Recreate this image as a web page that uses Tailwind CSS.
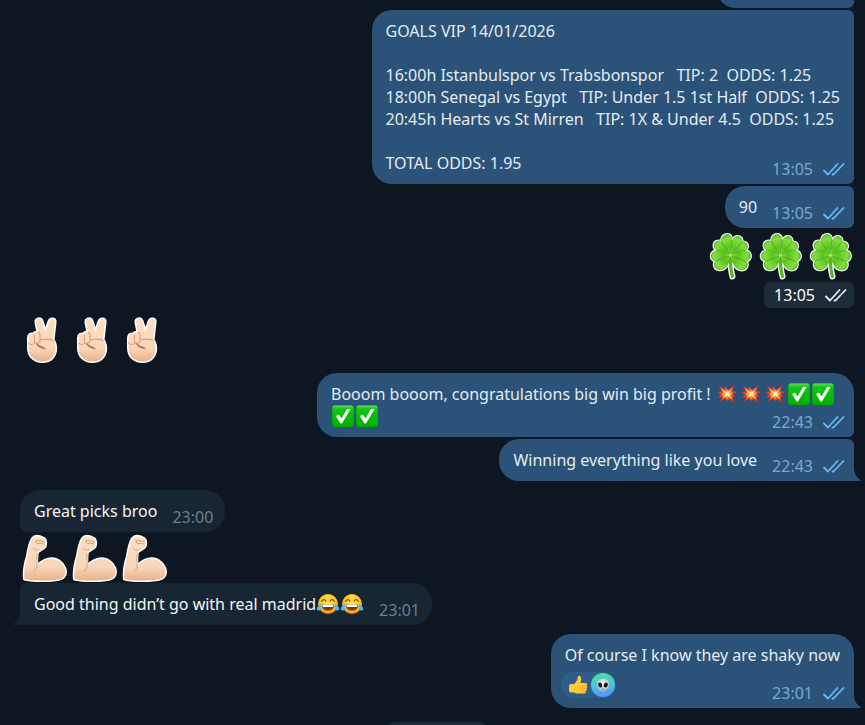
<!DOCTYPE html>
<html lang="en">
<head>
  <meta charset="UTF-8" />
  <meta name="viewport" content="width=device-width, initial-scale=1.0"/>
  <title>Chat</title>
  <script src="https://cdn.jsdelivr.net/npm/@tailwindcss/browser@4"></script>
</head>
<body class="bg-[#0e1621] font-['Noto_Sans',sans-serif] text-base leading-[22px] text-[#f5f5f5] overflow-hidden">

  <!-- Emoji and icon sprites -->
  <svg class="absolute w-0 h-0" aria-hidden="true">
    <defs>
      <linearGradient id="skin" x1="0" y1="0" x2="0" y2="1">
        <stop offset="0" stop-color="#fbdfc4"/><stop offset=".7" stop-color="#f9d6b8"/><stop offset="1" stop-color="#e9b08c"/>
      </linearGradient>
      <radialGradient id="leaf" gradientUnits="userSpaceOnUse" cx="21.500" cy="23" r="22">
        <stop offset="0" stop-color="#8fdc3c"/><stop offset=".35" stop-color="#5cc421"/><stop offset=".75" stop-color="#84de3e"/><stop offset="1" stop-color="#4db81c"/>
      </radialGradient>
      <linearGradient id="green" x1="0" y1="0" x2="0" y2="1">
        <stop offset="0" stop-color="#5fdc62"/><stop offset=".18" stop-color="#10c614"/><stop offset="1" stop-color="#00b000"/>
      </linearGradient>
      <radialGradient id="face" cx=".5" cy=".4" r=".6">
        <stop offset="0" stop-color="#ffe748"/><stop offset=".65" stop-color="#fdc72c"/><stop offset="1" stop-color="#ee8a12"/>
      </radialGradient>
      <radialGradient id="burst" cx=".5" cy=".5" r=".5">
        <stop offset="0" stop-color="#ff9c3c"/><stop offset=".5" stop-color="#f0502a"/><stop offset="1" stop-color="#c9301e"/>
      </radialGradient>
      <linearGradient id="avatar" x1=".4" y1="0" x2=".6" y2="1">
        <stop offset="0" stop-color="#3fe69a"/><stop offset=".5" stop-color="#4cc3dc"/><stop offset="1" stop-color="#5a8dfc"/>
      </linearGradient>
      <radialGradient id="alien" cx=".5" cy=".4" r=".6">
        <stop offset="0" stop-color="#f4f6f6"/><stop offset="1" stop-color="#a9b3b8"/>
      </radialGradient>
    </defs>

    <symbol id="ticks" viewBox="0 0 22 14">
      <path d="M1 8.500L5 12.500L14.500 2M9.500 12.500L10.500 12.500L20.500 2" fill="none" stroke="currentColor" stroke-width="1.800" stroke-linejoin="round" stroke-linecap="round"/>
    </symbol>

    <symbol id="tail" viewBox="0 0 7 14">
      <path d="M0 0C0 6 2 10 6.500 13C7.200 13.500 7 14 6 14H0Z" fill="currentColor"/>
    </symbol>

    <symbol id="clover" viewBox="0 0 44 48">
      <g fill="#fff" stroke="#fff" stroke-width="3" stroke-linejoin="round">
        <path d="M21 24C21.500 32 21.500 38 23.500 44.500" stroke-width="6" stroke-linecap="round" fill="none"/>
        <path d="M21.500 23C14 22 5 19 5 13.500C5 9.500 9 8 12.500 9.500C12 5 15.500 2 19 2.500C25 4 23 14 21.500 23Z"/>
        <path d="M21.500 23C21 14 23 5 28.500 4.500C32 4.500 33.500 7 32.800 10C36.500 9.500 39 12 38.500 15C37 21 29 22 21.500 23Z"/>
        <path d="M21.500 23.500C14 17.500 4 17 2.500 22.500C1.500 26 3.500 28.500 7 28.800C4 31.500 5 36.500 9.500 37.500C17 39 20 31 21.500 23.500Z"/>
        <path d="M21.500 23.500C29 18 39 17 41 22C42.500 25.500 40 28.500 37 29.500C39.500 32.500 38 37 34 37.800C27 39 23 31 21.500 23.500Z"/>
      </g>
      <path d="M21 24C21.500 32 21.500 38 23.500 44.500" stroke="#55b823" stroke-width="3.200" stroke-linecap="round" fill="none"/>
      <g fill="url(#leaf)" stroke="#4aad1c" stroke-width=".7">
        <path d="M21.500 23C14 22 5 19 5 13.500C5 9.500 9 8 12.500 9.500C12 5 15.500 2 19 2.500C25 4 23 14 21.500 23Z"/>
        <path d="M21.500 23C21 14 23 5 28.500 4.500C32 4.500 33.500 7 32.800 10C36.500 9.500 39 12 38.500 15C37 21 29 22 21.500 23Z"/>
        <path d="M21.500 23.500C14 17.500 4 17 2.500 22.500C1.500 26 3.500 28.500 7 28.800C4 31.500 5 36.500 9.500 37.500C17 39 20 31 21.500 23.500Z"/>
        <path d="M21.500 23.500C29 18 39 17 41 22C42.500 25.500 40 28.500 37 29.500C39.500 32.500 38 37 34 37.800C27 39 23 31 21.500 23.500Z"/>
      </g>
      <path d="M21.500 23.500L12.500 10M21.500 23.500L32.500 10.500M21.500 23.500L7.500 28.800M21.500 23.500L36.500 29.300" stroke="#48a81a" stroke-width=".9" fill="none"/>
      <circle cx="21.500" cy="23.200" r="1.800" fill="#a6e85a"/>
    </symbol>

    <symbol id="victory" viewBox="0 0 36 48">
      <path d="M2.500 22C2.500 18.500 4.500 17.500 7.500 18C8.500 16.500 10.500 16 12 16.500L10 6.500C9.500 2.500 14.500 1.500 16 5L19.500 16L23 5.500C24.500 1.500 29.700 2.500 29 6.500L27 24C29.500 27 30 31 29.500 35C28 42 23 45.500 16.500 45.500C8 45.500 2.500 40 2.500 32Z" fill="#fff" stroke="#fff" stroke-width="3" stroke-linejoin="round"/>
      <path d="M2.500 22C2.500 18.500 4.500 17.500 7.500 18C8.500 16.500 10.500 16 12 16.500L10 6.500C9.500 2.500 14.500 1.500 16 5L19.500 16L23 5.500C24.500 1.500 29.700 2.500 29 6.500L27 24C29.500 27 30 31 29.500 35C28 42 23 45.500 16.500 45.500C8 45.500 2.500 40 2.500 32Z" fill="url(#skin)"/>
      <path d="M2.500 27C4 29 7 29 8.500 27V19M8.500 26C10 28 13 27.500 14 25.500V19C14 17.500 13 16.500 12 16.500M14 24C19 23 25 22 27.500 25" stroke="#dba07a" stroke-width="1.100" fill="none" stroke-linecap="round"/>
      <path d="M10 27.500C11.500 30.500 14.500 32.500 19.500 33C18.500 30.500 14.500 31 11.500 28Z" fill="#b5694a" stroke="#c88360" stroke-width=".7"/>
      <path d="M4 36C7 42 14 44.500 21 42.500" stroke="#edb796" stroke-width="1.300" fill="none"/>
    </symbol>

    <symbol id="muscle" viewBox="0 0 46 48">
      <path d="M2.500 45C1.500 37 3 30 5.500 22C6.500 15 7.500 9 10.500 4.500C13 1 18 2.500 22 4.500C24 6 24 10 23 12.500C21 15 17.500 16 15.500 18C14.500 22 15 27 14.500 33C19 27 26 24 32 25C39 26.500 43.500 33 43.500 38C43.500 42 41 44.500 36 45.500C26 47 12 47 2.500 45Z" fill="#fff" stroke="#fff" stroke-width="3" stroke-linejoin="round"/>
      <path d="M2.500 45C1.500 37 3 30 5.500 22C6.500 15 7.500 9 10.500 4.500C13 1 18 2.500 22 4.500C24 6 24 10 23 12.500C21 15 17.500 16 15.500 18C14.500 22 15 27 14.500 33C19 27 26 24 32 25C39 26.500 43.500 33 43.500 38C43.500 42 41 44.500 36 45.500C26 47 12 47 2.500 45Z" fill="url(#skin)"/>
      <path d="M14 7C17 6 20 6.500 22.500 8M14 7C14 9 15 10.500 17 9.500C19 8.500 20 10 22 10M11 14C13 16.500 15 16.500 17 15.500M12 37C13.500 36 14.500 34.500 15 33V20" stroke="#d69a76" stroke-width="1" fill="none" stroke-linecap="round"/>
    </symbol>

    <symbol id="boom" viewBox="0 0 24 22">
      <path d="M2.500 1.500L9 6.500L10.500 3L12.800 7L21 1L16.500 8L22 8.500L17.500 11.500L20.500 13.500L17 14L20.500 20.500L14 16L12.500 18.500L10 15.500L4.500 19.500L7.500 14L2.500 14.500L6 11.500L2.500 9L7 8.500Z" fill="url(#burst)"/>
      <path d="M5.500 4.500L10.500 8.500L12 6.500L13.500 8.500L18 4.500L15.500 9.500L18 10.500L15.500 12L17.500 16L13 14L11.500 16L10.500 13.500L7.500 15.500L8.500 12L6.500 11.500L8.500 10Z" fill="#ffa648"/>
      <path d="M9 8.500L12 9L15 8L14 10.800L14.800 13.500L12 12.500L9.500 13.500L10.500 11Z" fill="#fff0bb"/>
    </symbol>

    <symbol id="check" viewBox="0 0 24 22">
      <rect x="1" y="0" width="22" height="22" rx="3" fill="#0a9a10"/>
      <rect x="1.500" y=".5" width="21" height="21" rx="2.500" fill="url(#green)"/>
      <path d="M5 11L8 9.500L10.500 13.500L16 4H19.500L11 18.500H9.500Z" fill="#fff"/>
    </symbol>

    <symbol id="joy" viewBox="0 0 24 22">
      <circle cx="12" cy="11" r="10" fill="url(#face)"/>
      <path d="M5.500 8.500C6.500 6 9 6 10 8.300M14 8.300C15 6 17.500 6 18.500 8.500" stroke="#8a5212" stroke-width="1.200" fill="none" stroke-linecap="round"/>
      <path d="M6 11.500H18C18 15.500 16 17.500 12 17.500S6 15.500 6 11.500Z" fill="#7b3a12"/>
      <path d="M6.300 11.500H17.700L17 14H7Z" fill="#fff"/>
      <path d="M5 10.500C6 13 5.500 17 3 17.500C.5 17.500 .3 15.500 1.500 14C2.500 12.500 4 12 5 10.500ZM19 10.500C18 13 18.500 17 21 17.500C23.500 17.500 23.700 15.500 22.500 14C21.500 12.500 20 12 19 10.500Z" fill="#4cbcf2"/>
    </symbol>

    <symbol id="thumb" viewBox="0 0 20 20">
      <path d="M1 11C1 9.500 2 9 3.500 9H6C8 7.500 9.500 5 9.800 2C10 .3 12.500 .2 13 2.500C13.400 4.500 13 6 12.500 8H17.500C19.300 8 19.500 10 18.500 10.800C19.800 11.500 19.600 13 18.500 13.500C19.300 14.500 18.800 15.700 17.800 16C18.300 17.500 17.300 18.500 16 18.500H9.500C8 18.500 7 18 6 17.500H3C1.500 17.500 1 16.500 1 15Z" fill="#ffc83a"/>
      <path d="M14 10.800H18.500M14 13.500H18.500M14 16H17.800" stroke="#f0a52a" stroke-width=".8" fill="none"/>
    </symbol>

    <symbol id="alien-avatar" viewBox="0 0 24 24">
      <circle cx="12" cy="12" r="12" fill="url(#avatar)"/>
      <path d="M12 5.500C16 5.500 18.500 8 18.300 11.500C18 15 14.500 18.500 12 18.500S6 15 5.700 11.500C5.500 8 8 5.500 12 5.500Z" fill="url(#alien)"/>
      <ellipse cx="9.200" cy="12" rx="2" ry="2.500" transform="rotate(-25 9.200 12)" fill="#14181c"/>
      <ellipse cx="14.800" cy="12" rx="2" ry="2.500" transform="rotate(25 14.800 12)" fill="#14181c"/>
      <path d="M11 16.300H13" stroke="#59646a" stroke-width=".8"/>
    </symbol>
  </svg>

  <main class="min-h-screen pl-5 pr-[11px] flex flex-col items-start">

    <!-- previous message, scrolled out at the top -->
    <div class="self-end h-2 overflow-hidden flex items-end">
      <div class="w-[138px] h-[42px] shrink-0 rounded-l-[20px] rounded-r-md bg-[#2b5278]"></div>
    </div>

    <article class="self-end mt-0.5 px-3.5 py-2.5 rounded-l-[20px] rounded-r-md bg-[#2b5278] text-[#e4ecf2]">
      <p>GOALS VIP 14/01/2026</p>
      <p class="mt-[22px] whitespace-pre-wrap">16:00h Istanbulspor vs Trabsbonspor   TIP: 2  ODDS: 1.25
18:00h Senegal vs Egypt   TIP: Under 1.5 1st Half  ODDS: 1.25
20:45h Hearts vs St Mirren   TIP: 1X &amp; Under 4.5  ODDS: 1.25</p>
      <div class="mt-[22px] flex justify-between">
        <p>TOTAL ODDS: 1.95</p>
        <div class="mt-1.5 -mb-1.5 -mr-[5px] flex items-center gap-2.5 text-[#7da8d3]">
          <time>13:05</time>
          <svg class="w-[22px] h-3.5 text-[#65b9f4]" role="img" aria-label="Read"><use href="#ticks"/></svg>
        </div>
      </div>
    </article>

    <article class="self-end mt-0.5 px-3.5 py-2.5 rounded-l-[20px] rounded-r-md bg-[#2b5278] text-[#e4ecf2] flex gap-[15px]">
      <p>90</p>
      <div class="mt-1.5 -mb-1.5 -mr-[5px] flex items-center gap-2.5 text-[#7da8d3]">
        <time>13:05</time>
        <svg class="w-[22px] h-3.5 text-[#65b9f4]" role="img" aria-label="Read"><use href="#ticks"/></svg>
      </div>
    </article>

    <article class="self-end mt-1 flex flex-col items-end gap-0.5">
      <div class="flex gap-1.5 pr-px">
        <svg class="w-11 h-12" role="img" aria-label="Clover"><use href="#clover"/></svg>
        <svg class="w-11 h-12" role="img" aria-label="Clover"><use href="#clover"/></svg>
        <svg class="w-11 h-12" role="img" aria-label="Clover"><use href="#clover"/></svg>
      </div>
      <div class="h-[26px] pl-2.5 pr-[7px] rounded-md bg-[#1e2c3a] flex items-center gap-2.5 text-white">
        <time>13:05</time>
        <svg class="w-[22px] h-3.5 text-[#e4ecf2]" role="img" aria-label="Read"><use href="#ticks"/></svg>
      </div>
    </article>

    <article class="mt-2 pl-1.5 flex gap-3.5">
      <svg class="w-9 h-12" role="img" aria-label="Victory hand"><use href="#victory"/></svg>
      <svg class="w-9 h-12" role="img" aria-label="Victory hand"><use href="#victory"/></svg>
      <svg class="w-9 h-12" role="img" aria-label="Victory hand"><use href="#victory"/></svg>
    </article>

    <article class="self-end mt-[9px] max-w-[537px] px-3.5 py-2.5 rounded-[20px] rounded-br-md bg-[#2b5278] text-[#e4ecf2]">
      Booom booom, congratulations big win big profit ! <svg class="inline-block align-top w-6 h-[22px]" role="img" aria-label="Boom"><use href="#boom"/></svg><svg class="inline-block align-top w-6 h-[22px]" role="img" aria-label="Boom"><use href="#boom"/></svg><svg class="inline-block align-top w-6 h-[22px]" role="img" aria-label="Boom"><use href="#boom"/></svg><svg class="inline-block align-top w-6 h-[22px]" role="img" aria-label="Check"><use href="#check"/></svg><svg class="inline-block align-top w-6 h-[22px]" role="img" aria-label="Check"><use href="#check"/></svg><svg class="inline-block align-top w-6 h-[22px]" role="img" aria-label="Check"><use href="#check"/></svg><svg class="inline-block align-top w-6 h-[22px]" role="img" aria-label="Check"><use href="#check"/></svg>
      <div class="float-right mt-1.5 -mb-1.5 -mr-[5px] flex items-center gap-2.5 text-[#7da8d3]">
        <time>22:43</time>
        <svg class="w-[22px] h-3.5 text-[#65b9f4]" role="img" aria-label="Read"><use href="#ticks"/></svg>
      </div>
    </article>

    <article class="self-end relative mt-0.5 px-3.5 py-2.5 rounded-l-[20px] rounded-tr-md bg-[#2b5278] text-[#e4ecf2] flex gap-[15px]">
      <p>Winning everything like you love</p>
      <div class="mt-1.5 -mb-1.5 -mr-[5px] flex items-center gap-2.5 text-[#7da8d3]">
        <time>22:43</time>
        <svg class="w-[22px] h-3.5 text-[#65b9f4]" role="img" aria-label="Read"><use href="#ticks"/></svg>
      </div>
      <svg class="absolute left-full bottom-0 w-[7px] h-3.5 text-[#2b5278]" aria-hidden="true"><use href="#tail"/></svg>
    </article>

    <article class="mt-[9px] px-3.5 py-2.5 rounded-[20px] rounded-bl-md bg-[#182533] flex gap-[15px]">
      <p>Great picks broo</p>
      <time class="mt-1.5 -mb-1.5 -mr-0.5 text-[#6d7f8f]">23:00</time>
    </article>

    <article class="mt-0.5 pl-0.5 flex gap-1">
      <svg class="w-[46px] h-12" role="img" aria-label="Flexed biceps"><use href="#muscle"/></svg>
      <svg class="w-[46px] h-12" role="img" aria-label="Flexed biceps"><use href="#muscle"/></svg>
      <svg class="w-[46px] h-12" role="img" aria-label="Flexed biceps"><use href="#muscle"/></svg>
    </article>

    <article class="relative mt-px px-3.5 py-2.5 rounded-r-[20px] rounded-tl-md bg-[#182533] flex gap-[15px]">
      <p>Good thing didn’t go with real madrid<svg class="inline-block align-top w-6 h-[22px]" role="img" aria-label="Tears of joy"><use href="#joy"/></svg><svg class="inline-block align-top w-6 h-[22px]" role="img" aria-label="Tears of joy"><use href="#joy"/></svg></p>
      <time class="mt-1.5 -mb-1.5 -mr-0.5 text-[#6d7f8f]">23:01</time>
      <svg class="absolute right-full bottom-0 w-[7px] h-3.5 -scale-x-100 text-[#182533]" aria-hidden="true"><use href="#tail"/></svg>
    </article>

    <article class="self-end relative mt-[9px] px-3.5 py-2.5 rounded-t-[20px] rounded-bl-[20px] bg-[#2b5278] text-[#e4ecf2]">
      <p>Of course I know they are shaky now</p>
      <div class="mt-1.5 flex justify-between items-start">
        <button type="button" aria-label="Thumbs up reaction" class="-ml-1 h-[26px] pl-[7px] pr-px rounded-full bg-[#2f5d88] flex items-center gap-[3px]">
          <svg class="size-5" aria-hidden="true"><use href="#thumb"/></svg>
          <svg class="size-6" aria-hidden="true"><use href="#alien-avatar"/></svg>
        </button>
        <div class="mt-2.5 -mb-1.5 -mr-[5px] flex items-center gap-2.5 text-[#7da8d3]">
          <time>23:01</time>
          <svg class="w-[22px] h-3.5 text-[#65b9f4]" role="img" aria-label="Read"><use href="#ticks"/></svg>
        </div>
      </div>
      <svg class="absolute left-full bottom-0 w-[7px] h-3.5 text-[#2b5278]" aria-hidden="true"><use href="#tail"/></svg>
    </article>

    <!-- date label, just coming into view -->
    <div class="self-center mt-3.5 h-[3px] overflow-hidden">
      <div class="w-[108px] h-7 rounded-full bg-[#1e2c3a]"></div>
    </div>
  </main>
</body>
</html>
